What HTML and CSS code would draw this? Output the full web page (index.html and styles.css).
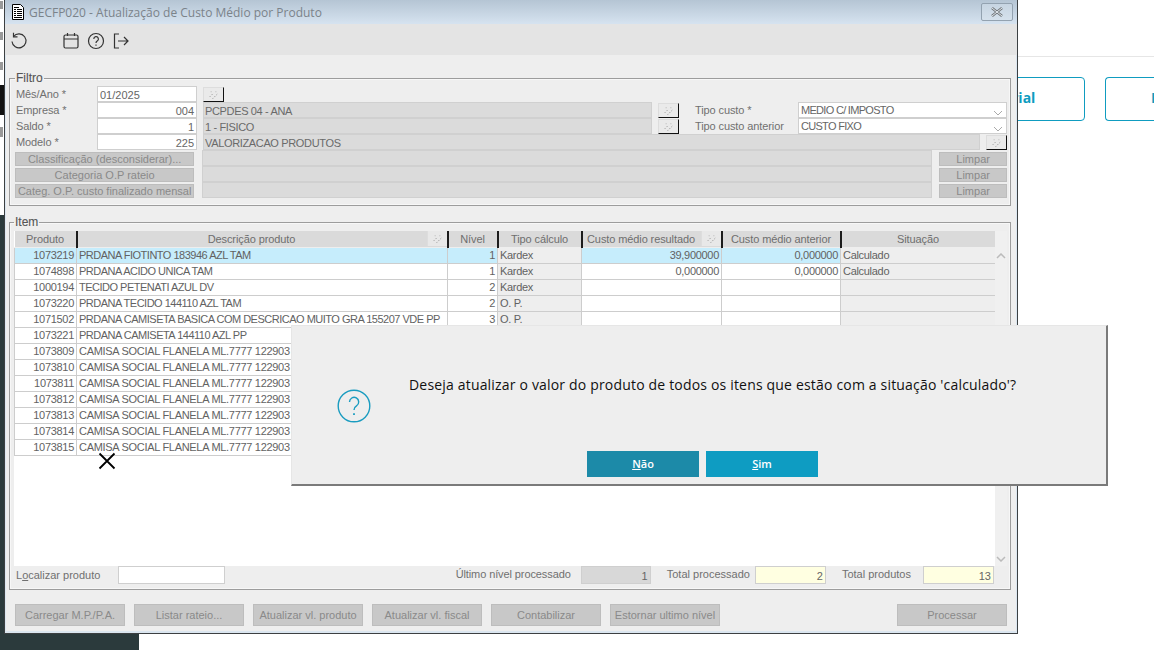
FILE: index.html
```html
<!DOCTYPE html>
<html lang="pt-BR">
<head>
<meta charset="utf-8">
<title>GECFP020</title>
<link rel="stylesheet" href="styles.css">
</head>
<body>
<svg width="0" height="0" class="defs" aria-hidden="true">
  <symbol id="wand" viewBox="0 0 20 14"><path d="M6 9l4-4M9 11l5-5" stroke="#9a9a9a" stroke-width="1" stroke-dasharray="1.400 1.400" fill="none"/><path d="M7 3h1v1H7zM12 3h1v1h-1z" fill="#b5b5b5"/></symbol>
</svg>

<div class="backdrop">
  <div class="bd-line"></div>
  <div class="bd-btn bd-btn-a">Material</div>
  <div class="bd-btn bd-btn-b">I</div>
  <div class="bd-dark"></div>
  <div class="bd-black"></div>
  <div class="bd-foot"></div>
  <div class="bd-bit bd-bit-1"></div>
  <div class="bd-bit bd-bit-2"></div>
  <div class="bd-bit bd-bit-3"></div>
  <div class="bd-bit bd-bit-4"></div>
</div>

<div class="window">
  <header class="titlebar">
    <svg class="doc-icon" width="14" height="16" viewBox="0 0 14 16"><path d="M1.500.5h8l3 3v12h-11z" fill="#fff" stroke="#000"/><path d="M3 3h5v1H3zM3 5h2v1H3zM6 5h5v1H6zM3 7h2v1H3zM6 7h5v1H6zM3 9h2v1H3zM6 9h5v1H6zM3 11h2v1H3zM6 11h5v1H6zM3 13h8v1H3z" fill="#000"/></svg>
    <span class="title-text">GECFP020 - Atualização de Custo Médio por Produto</span>
    <button class="close-btn" type="button" aria-label="Fechar">
      <svg width="14" height="10" viewBox="0 0 14 10"><path d="M2 1l10 8M12 1L2 9" stroke="#6f7478" stroke-width="2.600" fill="none"/><path d="M2 1l10 8M12 1L2 9" stroke="#e4ebf1" stroke-width="1" fill="none"/></svg>
    </button>
  </header>

  <div class="toolbar">
    <svg class="tool tool-first" width="18" height="18" viewBox="0 0 18 18" fill="none" stroke="#333" stroke-width="1.200"><path d="M3.500 4.500A7 7 0 1 1 2 9.500"/><path d="M3.500.8v4h4"/></svg>
    <svg class="tool tool-cal" width="16" height="18" viewBox="0 0 16 18" fill="none" stroke="#333" stroke-width="1.200"><rect x="1" y="3" width="14" height="13" rx="1.500"/><path d="M1 7h14M4.500 1v3M11.500 1v3"/></svg>
    <svg class="tool" width="18" height="18" viewBox="0 0 18 18" fill="none" stroke="#333" stroke-width="1.200"><circle cx="9" cy="9" r="7.500"/><path d="M6.800 7a2.300 2.300 0 1 1 3.400 2c-.8.500-1.200.9-1.200 1.900"/><path d="M9 12.500v1.300"/></svg>
    <svg class="tool" width="16" height="18" viewBox="0 0 16 18" fill="none" stroke="#333" stroke-width="1.200"><path d="M6 2H1.500v14H6M5 9h9.500M11 5l4 4-4 4"/></svg>
  </div>

  <div class="content">
    <fieldset class="group group-filter">
      <legend>Filtro</legend>
      <div class="row">
        <label class="lbl">Mês/Ano *</label>
        <div class="inp">01/2025</div>
        <button class="pick" type="button"><svg width="20" height="14"><use href="#wand"/></svg></button>
      </div>
      <div class="row">
        <label class="lbl">Empresa *</label>
        <div class="inp num">004</div>
        <div class="ro ro-short">PCPDES 04 - ANA</div>
        <button class="pick" type="button"><svg width="20" height="14"><use href="#wand"/></svg></button>
        <label class="lbl lbl-right">Tipo custo *</label>
        <div class="sel">MEDIO C/ IMPOSTO<svg class="chev" width="10" height="6" viewBox="0 0 10 6"><path d="M1 1l4 4 4-4" fill="none" stroke="#aaa"/></svg></div>
      </div>
      <div class="row">
        <label class="lbl">Saldo *</label>
        <div class="inp num">1</div>
        <div class="ro ro-short">1 - FISICO</div>
        <button class="pick" type="button"><svg width="20" height="14"><use href="#wand"/></svg></button>
        <label class="lbl lbl-right">Tipo custo anterior</label>
        <div class="sel">CUSTO FIXO<svg class="chev" width="10" height="6" viewBox="0 0 10 6"><path d="M1 1l4 4 4-4" fill="none" stroke="#aaa"/></svg></div>
      </div>
      <div class="row">
        <label class="lbl">Modelo *</label>
        <div class="inp num">225</div>
        <div class="ro ro-long">VALORIZACAO PRODUTOS</div>
        <button class="pick" type="button"><svg width="20" height="14"><use href="#wand"/></svg></button>
      </div>
      <div class="row">
        <button class="dis dis-wide" type="button">Classificação (desconsiderar)...</button>
        <div class="ro ro-mid"></div>
        <button class="dis dis-clear" type="button">Limpar</button>
      </div>
      <div class="row">
        <button class="dis dis-wide" type="button">Categoria O.P rateio</button>
        <div class="ro ro-mid"></div>
        <button class="dis dis-clear" type="button">Limpar</button>
      </div>
      <div class="row">
        <button class="dis dis-wide" type="button">Categ. O.P. custo finalizado mensal</button>
        <div class="ro ro-mid"></div>
        <button class="dis dis-clear" type="button">Limpar</button>
      </div>
    </fieldset>

    <fieldset class="group group-item">
      <legend>Item</legend>
      <div class="grid-wrap">
        <div class="grid-area">
          <table class="grid">
            <colgroup><col class="c1"><col class="c2"><col class="c3"><col class="c4"><col class="c5"><col class="c6"><col class="c7"></colgroup>
            <thead>
              <tr>
                <th>Produto</th>
                <th class="th-pick">Descrição produto<button class="pick pick-th" type="button"><svg width="20" height="14"><use href="#wand"/></svg></button></th>
                <th>Nível</th>
                <th>Tipo cálculo</th>
                <th class="th-pick">Custo médio resultado<button class="pick pick-th" type="button"><svg width="20" height="14"><use href="#wand"/></svg></button></th>
                <th>Custo médio anterior</th>
                <th>Situação</th>
              </tr>
            </thead>
            <tbody>
              <tr class="sel-row"><td class="r">1073219</td><td class="d">PRDANA FIOTINTO 183946 AZL TAM</td><td class="r">1</td><td class="g">Kardex</td><td class="r">39,900000</td><td class="r">0,000000</td><td class="g">Calculado</td></tr>
              <tr><td class="r">1074898</td><td class="d">PRDANA ACIDO UNICA TAM</td><td class="r">1</td><td class="g">Kardex</td><td class="r">0,000000</td><td class="r">0,000000</td><td class="g">Calculado</td></tr>
              <tr><td class="r">1000194</td><td class="d">TECIDO PETENATI AZUL DV</td><td class="r">2</td><td class="g">Kardex</td><td></td><td></td><td class="g"></td></tr>
              <tr><td class="r">1073220</td><td class="d">PRDANA TECIDO 144110 AZL TAM</td><td class="r">2</td><td class="g">O. P.</td><td></td><td></td><td class="g"></td></tr>
              <tr><td class="r">1071502</td><td class="d">PRDANA CAMISETA BASICA COM DESCRICAO MUITO GRA 155207 VDE PP</td><td class="r">3</td><td class="g">O. P.</td><td></td><td></td><td class="g"></td></tr>
              <tr><td class="r">1073221</td><td class="d">PRDANA CAMISETA 144110 AZL PP</td><td></td><td class="g"></td><td></td><td></td><td class="g"></td></tr>
              <tr><td class="r">1073809</td><td>CAMISA SOCIAL FLANELA ML.7777 122903</td><td></td><td class="g"></td><td></td><td></td><td class="g"></td></tr>
              <tr><td class="r">1073810</td><td>CAMISA SOCIAL FLANELA ML.7777 122903</td><td></td><td class="g"></td><td></td><td></td><td class="g"></td></tr>
              <tr><td class="r">1073811</td><td>CAMISA SOCIAL FLANELA ML.7777 122903</td><td></td><td class="g"></td><td></td><td></td><td class="g"></td></tr>
              <tr><td class="r">1073812</td><td>CAMISA SOCIAL FLANELA ML.7777 122903</td><td></td><td class="g"></td><td></td><td></td><td class="g"></td></tr>
              <tr><td class="r">1073813</td><td>CAMISA SOCIAL FLANELA ML.7777 122903</td><td></td><td class="g"></td><td></td><td></td><td class="g"></td></tr>
              <tr><td class="r">1073814</td><td>CAMISA SOCIAL FLANELA ML.7777 122903</td><td></td><td class="g"></td><td></td><td></td><td class="g"></td></tr>
              <tr><td class="r">1073815</td><td>CAMISA SOCIAL FLANELA ML.7777 122903</td><td></td><td class="g"></td><td></td><td></td><td class="g"></td></tr>
            </tbody>
          </table>
        </div>
        <div class="scrollbar">
          <svg width="10" height="6" viewBox="0 0 10 6"><path d="M1 5l4-4 4 4" fill="none" stroke="#bbb" stroke-width="1.500"/></svg>
          <svg width="10" height="6" viewBox="0 0 10 6"><path d="M1 1l4 4 4-4" fill="none" stroke="#bbb" stroke-width="1.500"/></svg>
        </div>
      </div>
      <div class="status">
        <label class="lbl-find">L<u>o</u>calizar produto</label>
        <div class="inp inp-find"></div>
        <span class="spacer"></span>
        <label class="lbl-stat lbl-stat-a">Último nível processado</label>
        <div class="stat stat-gray">1</div>
        <label class="lbl-stat lbl-stat-b">Total processado</label>
        <div class="stat stat-yellow stat-b">2</div>
        <label class="lbl-stat lbl-stat-c">Total produtos</label>
        <div class="stat stat-yellow stat-c">13</div>
      </div>
    </fieldset>

    <div class="actions">
      <button class="dis act" type="button">Carregar M.P./P.A.</button>
      <button class="dis act" type="button">Listar rateio...</button>
      <button class="dis act" type="button">Atualizar vl. produto</button>
      <button class="dis act" type="button">Atualizar vl. fiscal</button>
      <button class="dis act" type="button">Contabilizar</button>
      <button class="dis act" type="button">Estornar ultimo nível</button>
      <span class="spacer"></span>
      <button class="dis act act-last" type="button">Processar</button>
    </div>
  </div>
</div>

<svg class="cursor-x" width="18" height="18" viewBox="0 0 18 18"><path d="M1.500 1.500l15 15M16.500 1.500l-15 15" stroke="#000" stroke-width="1.800" fill="none"/></svg>

<div class="dialog" role="dialog">
  <div class="dialog-msg">Deseja atualizar o valor do produto de todos os itens que estão com a situação 'calculado'?</div>
  <svg class="dialog-icon" width="34" height="34" viewBox="0 0 34 34" fill="none" stroke="#1a9cc0" stroke-width="1.400"><circle cx="17" cy="17" r="15.800"/><path d="M12.500 13a4.600 4.600 0 1 1 7 3.900c-1.600 1-2.500 1.900-2.500 4"/><path d="M17 24.200v1.800" stroke-width="1.800"/></svg>
  <div class="dialog-actions">
    <button class="dlg-btn dlg-no" type="button"><u>N</u>ão</button>
    <button class="dlg-btn dlg-yes" type="button"><u>S</u>im</button>
  </div>
</div>
</body>
</html>
```
FILE: styles.css
```css
* { box-sizing: border-box; }
html, body { margin: 0; padding: 0; width: 1154px; height: 650px; overflow: hidden; background: #fff; }
body { position: relative; font-family: "Liberation Sans", Arial, sans-serif; font-size: 11px; color: #666; }
button { font-family: inherit; font-size: inherit; margin: 0; padding: 0; }
.defs { position: absolute; }

/* page behind the window */
.backdrop { position: absolute; inset: 0; }
.bd-line { position: absolute; left: 1018px; right: 0; top: 56px; height: 1px; background: #e6e6e6; }
.bd-btn { position: absolute; top: 77px; height: 44px; border: 1px solid #0f9cc0; color: #0f9cc0; font: bold 14px/40px "Open Sans", sans-serif; }
.bd-btn-a { left: 900px; width: 185px; padding-left: 75px; border-radius: 4px; }
.bd-btn-b { left: 1105px; width: 49px; padding-left: 45px; border-right: 0; border-radius: 4px 0 0 4px; }
.bd-dark { position: absolute; left: 0; top: 215px; width: 5px; height: 435px; background: #2b3a3c; }
.bd-black { position: absolute; left: 0; top: 85px; width: 5px; height: 30px; background: #111; }
.bd-foot { position: absolute; left: 0; top: 633px; width: 139px; height: 17px; background: #2b3a3c; }
.bd-bit { position: absolute; left: 0; width: 3px; background: #999; }
.bd-bit-1 { top: 1px; height: 8px; }
.bd-bit-2 { top: 32px; height: 8px; }
.bd-bit-3 { top: 62px; height: 8px; }
.bd-bit-4 { top: 127px; height: 10px; }

/* window */
.window { position: absolute; left: 4px; top: 0; width: 1014px; height: 634px; background: #eee; border: 1px solid #3c4042; border-top: 0; display: flex; flex-direction: column; box-shadow: inset 1px 0 0 #dbe6f0, inset -1px 0 0 #dbe6f0, inset 0 -2px 0 #dbe6f0; }
.titlebar { height: 24px; flex: none; display: flex; align-items: center; padding: 0 4px 0 6px; background: linear-gradient(#b5c5d4, #d6e3f0); }
.doc-icon { flex: none; margin-right: 4px; }
.title-text { font: 12px/18px "Open Sans", sans-serif; color: #7b838a; flex: 1; margin-top: 2px; }
.close-btn { width: 32px; height: 18px; border: 1px solid #93a2b0; border-radius: 2px; background: linear-gradient(#c7d5e2, #d5e1ec); display: flex; align-items: center; justify-content: center; }
.toolbar { height: 31px; flex: none; background: #e4e4e4; display: flex; align-items: center; gap: 8px; padding: 2px 0 0 5px; }
.tool { flex: none; }
.tool-first { margin-right: 27px; }
.tool-cal { margin-right: 0; }
.content { flex: 1; padding: 16px 6px 0 4px; display: flex; flex-direction: column; }

.group { margin: 0; border: 1px solid #9c9c9c; padding: 1px 3px 0 5px; box-shadow: inset 0 0 0 1px #f7f7f7; min-width: 0; }
.group legend { padding: 0 1px; margin: 0; font-size: 12px; line-height: 14px; color: #555; font-weight: 500; -webkit-text-stroke: .1px #555; }
.group-filter { height: 135px; }
.group-item { height: 375px; margin-top: 9px; padding: 2px 3px 0 4px; }

.row { display: flex; height: 16px; align-items: stretch; }
.lbl { width: 82px; flex: none; padding-left: 1px; line-height: 17px; color: #707070; letter-spacing: -.1px; white-space: nowrap; }
.inp { width: 100px; flex: none; background: #fff; border: 1px solid #cfcfcf; padding: 0 2px; line-height: 16px; color: #666; }
.num { text-align: right; }
.pick { width: 21px; height: 15px; flex: none; margin: 1px 0 0 6px; background: #eaeaea; border: 0; border-top: 1px solid #ddd; border-left: 1px solid #ddd; border-right: 1px solid #111; border-bottom: 1px solid #111; display: flex; align-items: center; justify-content: center; }
.ro { flex: none; margin-left: 6px; background: #dbdbdb; border: 1px solid #d0d0d0; padding: 0 1px; line-height: 16px; color: #6a6a6a; letter-spacing: -.35px; }
.ro-short { width: 449px; }
.ro-long { width: 777px; }
.ro-mid { width: 730px; margin-left: 8px; }
.lbl-right { width: 103px; margin-left: 16px; padding-left: 0; }
.sel { width: 209px; flex: none; position: relative; background: #fff; border: 1px solid #cfcfcf; padding: 0 2px; line-height: 15px; color: #666; letter-spacing: -.7px; }
.chev { position: absolute; right: 3px; top: 7px; }
.dis { background: #c8c8c8; border: 1px solid #bdbdbd; color: #8a8a8a; }
.dis-wide { width: 180px; height: 14px; line-height: 12px; margin-top: 2px; white-space: nowrap; padding: 0; }
.dis-clear { width: 68px; height: 14px; line-height: 12px; margin: 2px 0 0 7px; }

/* grid */
.grid-wrap { height: 335px; display: flex; background: #fff; }
.grid-area { width: 981px; flex: none; }
.grid { width: 981px; table-layout: fixed; border-collapse: collapse; }
.c1 { width: 62px; } .c2 { width: 371px; } .c3 { width: 50px; } .c4 { width: 84px; } .c5 { width: 140px; } .c6 { width: 119px; } .c7 { width: 155px; }
.grid th { height: 16px; padding: 1px 0 0; font-weight: 400; background: #dadada; color: #6e6e6e; border-right: 2px solid #1c1c1c; border-bottom: 1px solid #eee; text-align: center; line-height: 14px; letter-spacing: -.1px; white-space: nowrap; position: relative; }
.grid th.th-pick { padding-right: 21px; }
.pick-th { position: absolute; right: 0; top: 0; margin: 0; width: 20px; height: 15px; border-right: 0; border-bottom: 0; border-top: 0; background: #e8e8e8; }
.grid td { height: 16px; padding: 0 2px; border: 1px solid #cdcdcd; line-height: 14px; color: #626262; letter-spacing: -.3px; white-space: nowrap; overflow: hidden; }
.grid td.r { text-align: right; }
.grid td.g { background: #eee; }
.grid td.d { letter-spacing: -.5px; }
.sel-row td { background: #c6edfc; }
.scrollbar { flex: 1; background: #f0f0f0; display: flex; flex-direction: column; align-items: center; justify-content: space-between; padding: 22px 0 4px; }

.status { display: flex; align-items: flex-start; height: 20px; }
.lbl-find { width: 102px; flex: none; margin-left: 2px; line-height: 18px; color: #707070; }
.inp-find { width: 107px; height: 18px; }
.spacer { flex: 1; }
.lbl-stat { line-height: 17px; color: #707070; white-space: nowrap; }
.lbl-stat-a { letter-spacing: -.1px; }
.lbl-stat-b { margin-left: 16px; }
.lbl-stat-c { margin-left: 16px; }
.stat { width: 71px; height: 18px; margin-left: 10px; border: 1px solid #cfcfcf; text-align: right; line-height: 18px; padding: 0 2px; color: #666; }
.stat-gray { width: 70px; background: #d8d8d8; }
.stat-yellow { background: #ffffe1; }
.stat-b { margin-left: 5px; }
.stat-c { margin-left: 12px; margin-right: 13px; }

.actions { display: flex; margin-top: 14px; padding-left: 6px; height: 22px; gap: 9px; }
.act { width: 110px; height: 22px; white-space: nowrap; padding: 0; }
.act-last { margin-right: 4px; }

/* cursor & dialog */
.cursor-x { position: absolute; left: 98px; top: 452px; }
.dialog { position: absolute; left: 291px; top: 325px; width: 817px; height: 161px; background: #eee; border: 1px solid #e6e6e6; border-right: 2px solid #7a7a7a; border-bottom: 2px solid #7a7a7a; }
.dialog-msg { position: absolute; left: 117px; top: 48px; white-space: nowrap; font: 14px/22px "Open Sans", sans-serif; letter-spacing: .18px; color: #111; }
.dialog-icon { position: absolute; left: 45px; top: 63px; }
.dialog-actions { position: absolute; left: 295px; top: 125px; display: flex; gap: 7px; }
.dlg-btn { width: 112px; height: 26px; border: 0; color: #fff; font: 600 11px/26px "Open Sans", sans-serif; }
.dlg-no { background: #1c8aa8; }
.dlg-yes { background: #0e9cc2; }
```
